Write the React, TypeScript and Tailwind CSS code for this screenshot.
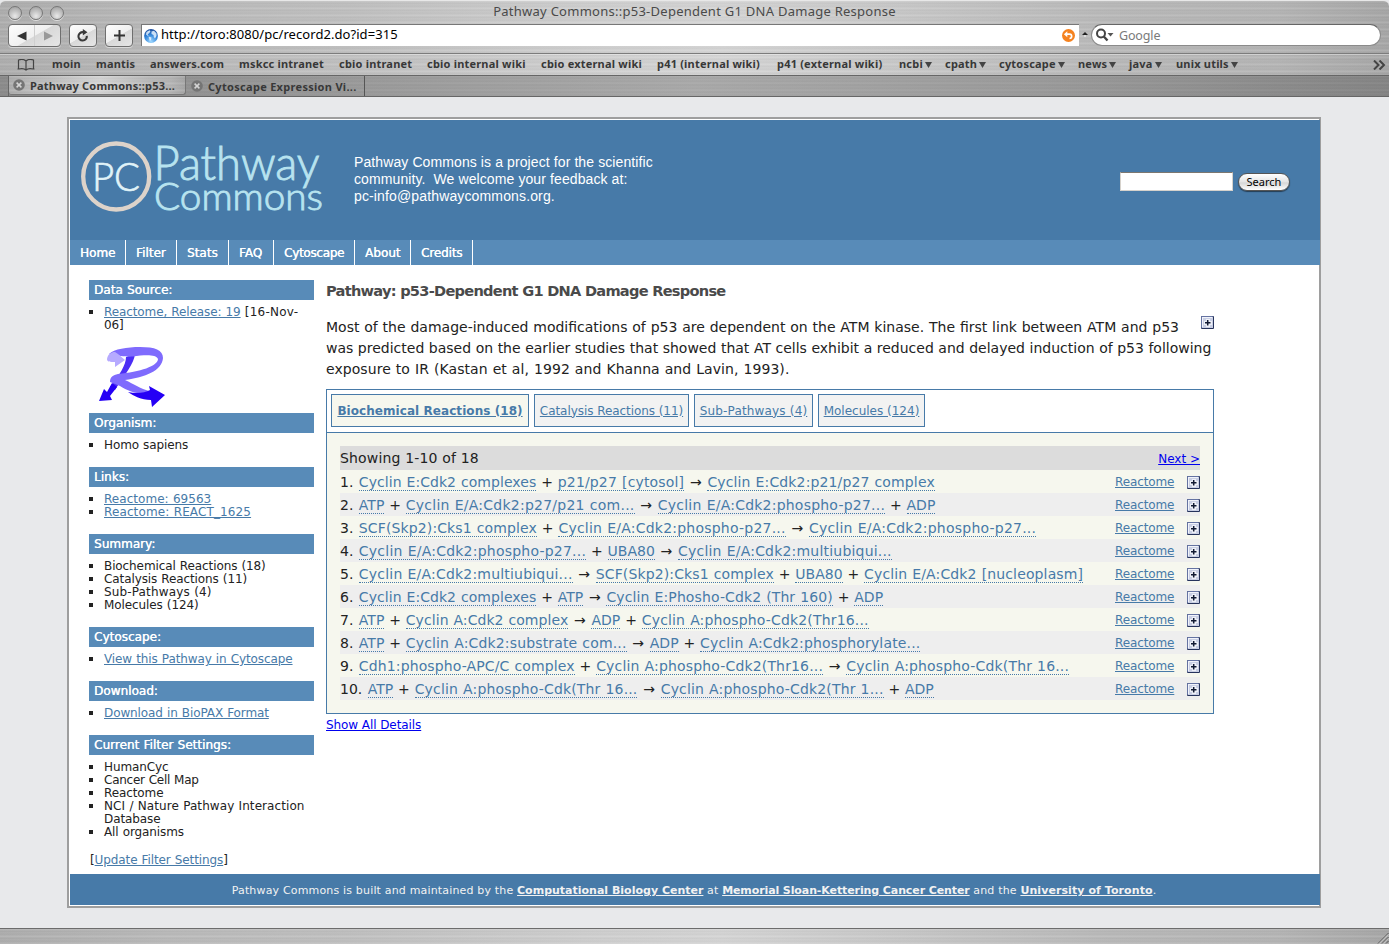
import { Fragment, type ReactNode } from "react";

const METAL =
  "bg-[repeating-linear-gradient(180deg,rgba(255,255,255,0.10)_0px,rgba(255,255,255,0.10)_1px,rgba(0,0,0,0.035)_2px,rgba(255,255,255,0.03)_4px,rgba(0,0,0,0.03)_5px,rgba(255,255,255,0.08)_7px),linear-gradient(90deg,#adadad_0%,#b9b9b9_12%,#bfbfbf_25%,#cecece_42%,#d4d4d4_52%,#c6c6c6_66%,#b8b8b8_80%,#b4b4b4_92%,#a6a6a6_100%)]";
const DARK_METAL =
  "bg-[repeating-linear-gradient(180deg,rgba(255,255,255,0.07)_0px,rgba(0,0,0,0.03)_2px,rgba(255,255,255,0.03)_4px,rgba(0,0,0,0.03)_5px,rgba(255,255,255,0.05)_7px),linear-gradient(90deg,#8b8b8b_0%,#999_25%,#a9a9a9_50%,#9a9a9a_75%,#848484_100%)]";

const LUCIDA = "font-['Noto_Sans',sans-serif]";
const VERDANA = "font-['DejaVu_Sans',sans-serif]";

const bookmarks: { label: string; w: string; menu?: boolean }[] = [
  { label: "moin", w: "w-[44px]" },
  { label: "mantis", w: "w-[54px]" },
  { label: "answers.com", w: "w-[89px]" },
  { label: "mskcc intranet", w: "w-[100px]" },
  { label: "cbio intranet", w: "w-[88px]" },
  { label: "cbio internal wiki", w: "w-[114px]" },
  { label: "cbio external wiki", w: "w-[116px]" },
  { label: "p41 (internal wiki)", w: "w-[120px]" },
  { label: "p41 (external wiki)", w: "w-[122px]" },
  { label: "ncbi", w: "w-[46px]", menu: true },
  { label: "cpath", w: "w-[54px]", menu: true },
  { label: "cytoscape", w: "w-[79px]", menu: true },
  { label: "news", w: "w-[51px]", menu: true },
  { label: "java", w: "w-[47px]", menu: true },
  { label: "unix utils", w: "w-[70px]", menu: true },
];

const navItems = [
  { label: "Home", w: "w-[56px]" },
  { label: "Filter", w: "w-[51px]" },
  { label: "Stats", w: "w-[52px]" },
  { label: "FAQ", w: "w-[45px]" },
  { label: "Cytoscape", w: "w-[81px] tracking-[-0.3px]" },
  { label: "About", w: "w-[56px]" },
  { label: "Credits", w: "w-[62px] tracking-[-0.15px]" },
];

const tabs = [
  { label: "Biochemical Reactions (18)", w: "w-[198px] bg-[#f6f7ee] font-bold tracking-[0.06px]" },
  { label: "Catalysis Reactions (11)", w: "w-[155px] bg-[#f2f2f2] tracking-[-0.06px]" },
  { label: "Sub-Pathways (4)", w: "w-[119px] bg-[#f2f2f2] tracking-[0.17px]" },
  { label: "Molecules (124)", w: "w-[107px] bg-[#f2f2f2]" },
];

// Participants and operators of each reaction, in reading order.
const reactions: string[][] = [
  ["Cyclin E:Cdk2 complexes", "+", "p21/p27 [cytosol]", "→", "Cyclin E:Cdk2:p21/p27 complex"],
  ["ATP", "+", "Cyclin E/A:Cdk2:p27/p21 com...", "→", "Cyclin E/A:Cdk2:phospho-p27...", "+", "ADP"],
  ["SCF(Skp2):Cks1 complex", "+", "Cyclin E/A:Cdk2:phospho-p27...", "→", "Cyclin E/A:Cdk2:phospho-p27..."],
  ["Cyclin E/A:Cdk2:phospho-p27...", "+", "UBA80", "→", "Cyclin E/A:Cdk2:multiubiqui..."],
  ["Cyclin E/A:Cdk2:multiubiqui...", "→", "SCF(Skp2):Cks1 complex", "+", "UBA80", "+", "Cyclin E/A:Cdk2 [nucleoplasm]"],
  ["Cyclin E:Cdk2 complexes", "+", "ATP", "→", "Cyclin E:Phosho-Cdk2 (Thr 160)", "+", "ADP"],
  ["ATP", "+", "Cyclin A:Cdk2 complex", "→", "ADP", "+", "Cyclin A:phospho-Cdk2(Thr16..."],
  ["ATP", "+", "Cyclin A:Cdk2:substrate com...", "→", "ADP", "+", "Cyclin A:Cdk2:phosphorylate..."],
  ["Cdh1:phospho-APC/C complex", "+", "Cyclin A:phospho-Cdk2(Thr16...", "→", "Cyclin A:phospho-Cdk(Thr 16..."],
  ["ATP", "+", "Cyclin A:phospho-Cdk(Thr 16...", "→", "Cyclin A:phospho-Cdk2(Thr 1...", "+", "ADP"],
];

// Gives names with much punctuation a little more air, in px per letter.
function punctuationTracking(name: string): number {
  const wide = (name.match(/[:/]/g) ?? []).length * 1.3;
  const narrow = (name.match(/[()[\].-]/g) ?? []).length * 0.7;
  return (wide + narrow) / name.length;
}

function PlusBox() {
  return (
    <svg width="13" height="13" viewBox="0 0 13 13" className="block shrink-0">
      <rect width="13" height="13" rx="1" fill="#26335c" />
      <rect width="12" height="12" rx="1" fill="#6573a2" />
      <rect x="1" y="1" width="11" height="11" fill="#c9cfe4" />
      <path d="M1 1H11V2H2V11H1Z" fill="#f1f3fa" />
      <path d="M3 5H11V9H3ZM5 3H9V11H5Z" fill="#eef0f8" />
      <path d="M4 6.700H9.500M6.700 4V9.500" stroke="#111a33" strokeWidth="1.500" />
    </svg>
  );
}

function WindowDot() {
  return (
    <span className="size-[14px] rounded-full border border-[#777] bg-[radial-gradient(circle_at_50%_75%,#e9e9e9_0%,#c4c4c4_45%,#9a9a9a_100%)] shadow-[0_1px_0_rgba(255,255,255,0.6)]" />
  );
}

const BUTTON =
  "flex h-[23px] items-center justify-center rounded-[4px] border border-[#6f6f6f] bg-[linear-gradient(150deg,#fdfdfd_0%,#f0f0f0_50%,#d8d8d8_52%,#e6e6e6_100%)] shadow-[0_1px_0_rgba(255,255,255,0.5)]";

function Toolbar() {
  return (
    <div className="flex h-[29px] items-start pl-2">
      <div className={`${BUTTON} w-[53px]`}>
        <span className="flex h-full flex-1 items-center justify-center border-r border-[#cfcfcf]">
          <svg width="10" height="10" viewBox="0 0 10 10"><path d="M0 5 9.500 .5V9.500Z" fill="#333" /></svg>
        </span>
        <span className="flex h-full flex-1 items-center justify-center">
          <svg width="10" height="10" viewBox="0 0 10 10"><path d="M10 5 1 .5V9.500Z" fill="#999" /></svg>
        </span>
      </div>
      <div className={`${BUTTON} ml-2 w-[28px]`}>
        <svg width="12" height="13" viewBox="0 0 12 13">
          <path d="M9.800 6.800A4.200 4.200 0 1 1 6.300 3.200" fill="none" stroke="#3a3a3a" strokeWidth="2.100" />
          <path d="M5.800 0 10.500 3.200 5.800 6.600Z" fill="#3a3a3a" />
        </svg>
      </div>
      <div className={`${BUTTON} ml-2 w-[28px]`}>
        <svg width="11" height="11" viewBox="0 0 11 11"><path d="M0 5.500H11M5.500 0V11" stroke="#333" strokeWidth="2" /></svg>
      </div>
      <div className="ml-2 flex h-[22px] w-[938px] items-center border-t border-l border-[#777] bg-white pr-[4px] pl-[2px]">
        <svg width="14" height="14" viewBox="0 0 14 14">
          <defs>
            <radialGradient id="globe" cx=".5" cy=".9" r=".9">
              <stop offset="0" stopColor="#9ed8ff" />
              <stop offset=".55" stopColor="#3385da" />
              <stop offset="1" stopColor="#1c4b9a" />
            </radialGradient>
          </defs>
          <circle cx="7" cy="7" r="6.900" fill="url(#globe)" />
          <path d="M2.500 3 5.500 1.200 6.500 2.200 5 4.500 3.500 5 4.500 6.500 4 7 2 5.500ZM7.500 2.500 10 1.800 12.500 4.500 12.500 7 11 9.500 9.800 8 9.500 6 7.500 5ZM4.500 7.500 7.500 8.500 7 11 5.800 12Z" fill="#e6f3ff" opacity=".85" />
        </svg>
        <span className="ml-[3px] pb-[2px] text-[13px] leading-[19px] tracking-[0.06px] whitespace-nowrap text-black">http://toro:8080/pc/record2.do?id=315</span>
        <svg className="ml-auto" width="13" height="13" viewBox="0 0 13 13">
          <circle cx="6.500" cy="6.500" r="6.500" fill="#f5821f" />
          <path d="M4 5.200H7.500A2.100 2.100 0 0 1 7.500 9.500" fill="none" stroke="#fff" strokeWidth="1.700" />
          <path d="M1.900 5.200 5.300 2.200V8.200Z" fill="#fff" />
        </svg>
      </div>
      <svg className="mt-[8px] ml-[3px]" width="6" height="6" viewBox="0 0 6 6">
        <path d="M0 3 3 0 6 3Z" fill="#222" />
        <rect x="2" y="3" width="2" height="2" fill="#ddd" />
      </svg>
      <div className="ml-[3px] flex h-[22px] w-[290px] items-center rounded-full border border-[#8a8a8a] border-t-[#666] bg-white pl-[4px]">
        <svg width="18" height="14" viewBox="0 0 18 14">
          <circle cx="5" cy="5.500" r="4" fill="none" stroke="#444" strokeWidth="2" />
          <path d="M7.800 8.500 11.500 12.500" stroke="#444" strokeWidth="2.400" />
          <path d="M11.500 5H17.500L14.500 8.500Z" fill="#555" />
        </svg>
        <span className="ml-[5px] pt-px text-[12.500px] leading-5 tracking-[-0.15px] text-[#7a7a7a]">Google</span>
      </div>
    </div>
  );
}

function TabClose() {
  return (
    <svg className="shrink-0" width="12" height="12" viewBox="0 0 12 12">
      <circle cx="6" cy="6" r="5.800" fill="#757575" />
      <path d="M3.600 3.600 8.400 8.400M8.400 3.600 3.600 8.400" stroke="#d5d5d5" strokeWidth="1.500" />
    </svg>
  );
}

function BrowserChrome() {
  return (
    <header className={`${LUCIDA} shrink-0`}>
      <div className={`${METAL} rounded-t-[6px] border-t border-[#e8e8e8]`}>
        <div className="flex h-[23px] items-center px-2">
          <div className="flex w-[200px] gap-[7px]">
            <WindowDot />
            <WindowDot />
            <WindowDot />
          </div>
          <div className="flex-1 pb-[3px] text-center text-[13px] leading-5 tracking-[0.26px] text-[#4a4a4a]">
            Pathway Commons::p53-Dependent G1 DNA Damage Response
          </div>
          <div className="w-[200px]" />
        </div>
        <Toolbar />
        <div className="flex h-[22px] items-center border-t border-[#7c7c7c] pl-[17px] text-[11px] font-bold whitespace-nowrap text-[#383838] shadow-[inset_0_1px_0_rgba(255,255,255,0.4)]">
          <svg className="mr-[17px] shrink-0" width="18" height="12" viewBox="0 0 18 12">
            <path d="M9 2C7 .3 3.500 .3 1.500 1V10H.5M9 2C11 .3 14.500 .3 16.500 1V10H17.500M1.500 10C4 9.400 7.500 9.500 9 11 10.500 9.500 14 9.400 16.500 10M9 2V11" fill="none" stroke="#444" strokeWidth="1.200" />
          </svg>
          {bookmarks.map((b) => (
            <span key={b.label} className={`${b.w} flex shrink-0 items-center gap-[2px] tracking-[0.2px]`}>
              {b.label}
              {b.menu && (
                <svg width="7" height="6" viewBox="0 0 7 6"><path d="M0 0H7L3.500 6Z" fill="#444" /></svg>
              )}
            </span>
          ))}
          <svg className="mr-[3px] ml-auto shrink-0" width="13" height="10" viewBox="0 0 13 10">
            <path d="M1 .5 5.500 5 1 9.500M6.500 .5 11 5 6.500 9.500" fill="none" stroke="#444" strokeWidth="2" />
          </svg>
        </div>
      </div>
      <div className={`${DARK_METAL} flex h-[22px] border-y border-[#666] text-[11px] leading-5 font-bold whitespace-nowrap text-[#383838]`}>
        <div className="w-[9px] border-r border-[#666]" />
        <div className={`${METAL} flex h-[19px] w-[177px] items-center gap-[5px] rounded-b-[3px] border-r border-b border-[#777] pl-[4px] tracking-[0.2px]`}>
          <TabClose />
          <span className="pt-[2px]">Pathway Commons::p53...</span>
        </div>
        <div className="flex w-[179px] items-center gap-[5px] border-r border-[#555] pl-[5px] tracking-[0.3px]">
          <TabClose />
          <span className="pt-px">Cytoscape Expression Vi...</span>
        </div>
      </div>
    </header>
  );
}

function Logo() {
  return (
    <svg width="246" height="76" viewBox="80 140 246 76" className="shrink-0 overflow-visible font-['Lato',sans-serif] font-light">
      <circle cx="116.200" cy="176.500" r="33" fill="none" stroke="#ddd3ca" strokeWidth="4.300" />
      <g fill="#e0f3f8" stroke="#e0f3f8" strokeWidth=".7">
        <text x="92" y="190.500" fontSize="40" textLength="48" lengthAdjust="spacingAndGlyphs">PC</text>
      </g>
      <g fill="#b7e3ef" stroke="#b7e3ef" strokeWidth=".9">
        <text x="153.500" y="180" fontSize="47" textLength="166" lengthAdjust="spacingAndGlyphs">Pathway</text>
        <text x="154" y="209.500" fontSize="37" textLength="169" lengthAdjust="spacingAndGlyphs">Commons</text>
      </g>
    </svg>
  );
}

function ReactomeLogo() {
  return (
    <svg width="68" height="62" viewBox="0 0 68 62" className="block">
      <path d="M28 11 37 8C36 18 27 28 17 44L12 41C22 28 28 19 28 11Z" fill="#4b2df5" />
      <path d="M14 37 19 41 12 50 14 54 1 55 6 43 9 46Z" fill="#2500f5" />
      <path d="M11 8C16 3 29 1 42 1C57 1 65 4 65 12C64 25 47 31 27 34C36 38 43 43 51 45L46 48C38 48 28 44 22 40L12 36C12 31 15 29 20 28C42 26 60 20 60 13C58 8 46 9 35 10.500C29 11 22 10 11 8Z" fill="#7f6bfd" />
      <path d="M9 13C10 8 13 6 17 6L20 8 27 14 17 21V16C12 16 9 16 9 13Z" fill="#b6aaff" />
      <path d="M30 46C38 48 47 47 52 44L51 40 67 49 54 61 53 54C43 54 36 50 30 46Z" fill="#2500f5" />
    </svg>
  );
}

function SideSection({ title, children, className }: { title: string; children: ReactNode; className: string }) {
  return (
    <section className={className}>
      <h2 className="h-5 bg-[#588bb8] pl-[5px] text-[12px] leading-5 font-normal tracking-[0.02px] text-white [text-shadow:0.3px_0_0_#fff]">{title}</h2>
      <ul className="pt-[6px] text-[12px] leading-[13px]">{children}</ul>
    </section>
  );
}

function Item({ children }: { children: ReactNode }) {
  return (
    <li className="flex">
      <span className="mt-[4px] mr-[11px] size-1 shrink-0 bg-[#222]" />
      <span className="whitespace-nowrap">{children}</span>
    </li>
  );
}

function Link({ children }: { children: ReactNode }) {
  return <a className="text-[#477aa8] underline underline-offset-1">{children}</a>;
}

function Sidebar() {
  return (
    <aside className="w-[225px] shrink-0 pt-[15px] tracking-[-0.1px] [word-spacing:0.4px]">
      <SideSection title="Data Source:" className="h-[133px]">
        <Item><Link>Reactome, Release: 19</Link> <span className="tracking-[0.25px]">[16-Nov-</span><br />06]</Item>
        <li className="mt-[14px] pl-[9px]"><ReactomeLogo /></li>
      </SideSection>
      <SideSection title="Organism:" className="h-[54px]">
        <Item>Homo sapiens</Item>
      </SideSection>
      <SideSection title="Links:" className="h-[67px]">
        <Item><span className="tracking-[0.04px]"><Link>Reactome: 69563</Link></span></Item>
        <Item><span className="tracking-[0.12px]"><Link>Reactome: REACT_1625</Link></span></Item>
      </SideSection>
      <SideSection title="Summary:" className="h-[93px]">
        <Item>Biochemical Reactions (18)</Item>
        <Item>Catalysis Reactions (11)</Item>
        <Item><span className="tracking-[0.15px]">Sub-Pathways (4)</span></Item>
        <Item>Molecules (124)</Item>
      </SideSection>
      <SideSection title="Cytoscape:" className="h-[54px]">
        <Item><Link>View this Pathway in Cytoscape</Link></Item>
      </SideSection>
      <SideSection title="Download:" className="h-[54px]">
        <Item><Link>Download in BioPAX Format</Link></Item>
      </SideSection>
      <SideSection title="Current Filter Settings:" className="h-[118px]">
        <Item>HumanCyc</Item>
        <Item><span className="tracking-[-0.25px]">Cancer Cell Map</span></Item>
        <Item>Reactome</Item>
        <Item><span className="tracking-[0.07px]">NCI / Nature Pathway Interaction</span><br />Database</Item>
        <Item>All organisms</Item>
      </SideSection>
      <div className="pl-px text-[12px] leading-[14px]">[<Link>Update Filter Settings</Link>]</div>
    </aside>
  );
}

function Main() {
  return (
    <main className="ml-3 w-[888px] pt-[15px]">
      <h1 className="text-[14.600px] leading-[21px] font-bold tracking-[-0.74px] text-[#4a4a4a]">Pathway: p53-Dependent G1 DNA Damage Response</h1>
      <div className="mt-[15px] flex h-[73px] items-start justify-between">
        <p className="w-0 pt-px text-[14px] leading-[21px] whitespace-nowrap">
          <span className="[word-spacing:0.4px]">Most of the damage-induced modifications of p53 are dependent on the ATM kinase. The first link between ATM and p53</span><br />
          <span className="[word-spacing:0.1px]">was predicted based on the earlier studies that showed that AT cells exhibit a reduced and delayed induction of p53 following</span><br />
          <span className="tracking-[0.06px] [word-spacing:0.5px]">exposure to IR (Kastan et al, 1992 and Khanna and Lavin, 1993).</span>
        </p>
        <PlusBox />
      </div>
      <div className="h-[325px] border border-[#477aa8] bg-[#f6f7ee]">
        <div className="flex h-[43px] gap-[5px] border-b border-[#477aa8] bg-white p-1">
          {tabs.map((t) => (
            <div key={t.label} className={`${t.w} flex h-[33px] items-center justify-center border border-[#477aa8] text-[12px] whitespace-nowrap`}>
              <Link>{t.label}</Link>
            </div>
          ))}
        </div>
        <div className="px-[13px] pt-[13px]">
          <div className="flex h-6 items-center justify-between bg-[#dcdcdc] text-[14px]">
            <span className="tracking-[0.17px]">Showing 1-10 of 18</span>
            <a className="pt-[2px] text-[12px] text-[#0000ee] underline underline-offset-1">Next &gt;</a>
          </div>
          {reactions.map((parts, i) => (
            <div key={i} className={`flex h-[23px] ${i % 2 ? "bg-[#eeeeee]" : ""}`}>
              <div className="w-[775px] text-[14px] leading-6 whitespace-nowrap [word-spacing:0.4px]">
                {i + 1}
                <span className="tracking-[0.6px]">.</span>
                {parts.map((p, j) => (
                  <Fragment key={j}>
                    {" "}
                    {p === "+" ? (
                      p
                    ) : p === "→" ? (
                      <span className="px-[0.9px]">→</span>
                    ) : (
                      <a className="border-b border-dotted border-[#477aa8] text-[#477aa8]" style={{ letterSpacing: punctuationTracking(p) }}>{p}</a>
                    )}
                  </Fragment>
                ))}
              </div>
              <div className="w-[72px] pt-px text-[12px] leading-[23px] tracking-[-0.12px]"><Link>Reactome</Link></div>
              <div className="pt-[6px]"><PlusBox /></div>
            </div>
          ))}
        </div>
      </div>
      <a className="mt-[3px] block text-[12px] leading-4 tracking-[-0.08px] text-[#0000ee] underline underline-offset-1">Show All Details</a>
    </main>
  );
}

export default function App() {
  return (
    <div className="flex h-[944px] w-[1389px] flex-col overflow-hidden bg-[#e8e9eb]">
      <BrowserChrome />
      <div className={`${VERDANA} min-h-0 flex-1 pt-[20px] pl-[67px] text-[#222]`}>
        <div className="w-[1254px] border-2 border-[#9e9e9e] bg-white pt-px pb-px pl-px">
          <div className="-mr-px flex h-[120px] bg-[#477aa8]">
            <div className="flex flex-1 items-start pt-5 pl-[10px]">
              <Logo />
              <p className="ml-[28px] pt-[14px] font-['Liberation_Sans',sans-serif] text-[14px] leading-[17px] tracking-[0.1px] whitespace-pre text-white">
                {"Pathway Commons is a project for the scientific\ncommunity.  We welcome your feedback at:\n"}
                <span className="tracking-[0.14px]">pc-info@pathwaycommons.org.</span>
              </p>
            </div>
            <div className={`${LUCIDA} mt-[52px] mr-[30px] flex items-start`}>
              <div className="h-[19px] w-[113px] border border-[#d6d2cc] border-t-[#7c7770] bg-white" />
              <div className="mt-[1px] ml-[5px] flex h-[18px] w-[52px] items-center justify-center rounded-full border border-[#555] bg-[linear-gradient(180deg,#fff_0%,#e4e4e4_50%,#d6d6d6_55%,#fff_100%)] text-[11px] text-black shadow-[0_1px_1px_rgba(0,0,0,0.5)]">Search</div>
            </div>
          </div>
          <nav className="-mr-px flex h-[25px] bg-[#588bb8] text-[12px] leading-[26px] text-white [text-shadow:0.3px_0_0_#fff]">
            {navItems.map((n) => (
              <a key={n.label} className={`${n.w} h-[25px] shrink-0 border-r border-white pl-[10px]`}>{n.label}</a>
            ))}
          </nav>
          <div className="flex h-[609px] pl-[19px]">
            <Sidebar />
            <Main />
          </div>
          <footer className="-mr-px h-[31px] bg-[#477aa8] pr-[2px] text-center text-[11px] leading-[33px] tracking-[0.17px] whitespace-nowrap text-[#f2f2f2]">
            Pathway Commons is built and maintained by the{" "}
            <a className="font-bold tracking-[0px] underline underline-offset-1">Computational Biology Center</a> at{" "}
            <a className="font-bold tracking-[-0.1px] underline underline-offset-1">Memorial Sloan-Kettering Cancer Center</a> and the{" "}
            <a className="font-bold tracking-[0.08px] underline underline-offset-1">University of Toronto</a>.
          </footer>
        </div>
      </div>
      <div className={`${METAL} flex h-4 shrink-0 items-end justify-end border-t border-[#6c6c6c]`}>
        <svg width="12" height="12" viewBox="0 0 12 12">
          <path d="M1 11.500 11.500 1M5 11.500 11.500 5M9 11.500 11.500 9" stroke="#555" />
          <path d="M2.200 11.500 11.500 2.200M6.200 11.500 11.500 6.200" stroke="#ddd" strokeWidth=".7" />
        </svg>
      </div>
    </div>
  );
}
